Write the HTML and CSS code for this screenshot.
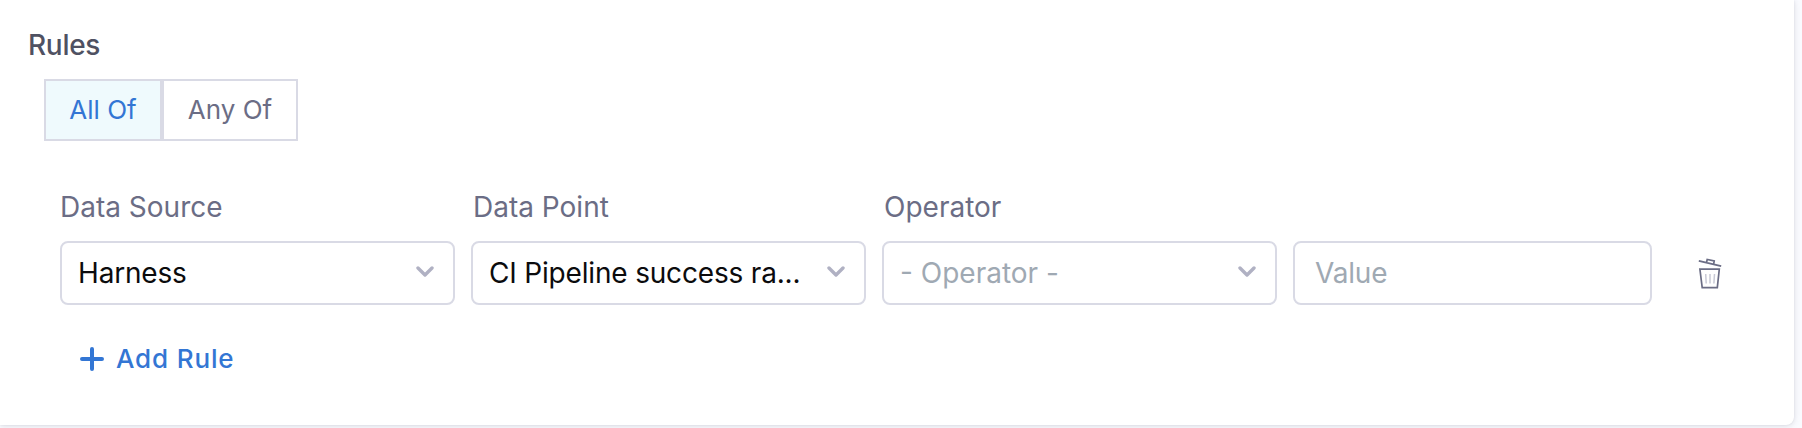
FILE: index.html
```html
<!DOCTYPE html>
<html lang="en">
<head>
<meta charset="utf-8">
<title>Rules</title>
<link rel="stylesheet" href="styles.css">
</head>
<body>
<section class="card">
  <h2 class="title">Rules</h2>
  <div class="toggle">
    <button class="toggle-btn all active">All Of</button>
    <button class="toggle-btn any">Any Of</button>
  </div>
  <div class="rule">
    <div class="field">
      <label class="label">Data Source</label>
      <div class="select"><span class="text">Harness</span><svg class="chevron" viewBox="0 0 18 11"><path d="M2 2l7 7 7-7"/></svg></div>
    </div>
    <div class="field">
      <label class="label inset">Data Point</label>
      <div class="select"><span class="text">CI Pipeline success ra...</span><svg class="chevron" viewBox="0 0 18 11"><path d="M2 2l7 7 7-7"/></svg></div>
    </div>
    <div class="field">
      <label class="label inset">Operator</label>
      <div class="select placeholder"><span class="text">- Operator -</span><svg class="chevron" viewBox="0 0 18 11"><path d="M2 2l7 7 7-7"/></svg></div>
    </div>
    <div class="value placeholder">Value</div>
    <svg class="trash" viewBox="0 0 24 32">
      <path d="M.8 2.8L23.2 8.2M8.6 4.3l.6-2.8 7 1.4-.5 3M1.9 11.2h19.4l-2 18.4H4.2z"/>
      <path class="ribs" d="M7.7 16l.5 9.5M12 16v9.5M16.5 16l-.6 9.5"/>
    </svg>
  </div>
  <button class="add">
    <svg class="plus" viewBox="0 0 24 24"><path d="M12 2v20M2 12h20"/></svg>
    <span class="add-text">Add Rule</span>
  </button>
</section>
</body>
</html>
```
FILE: styles.css
```css
* { box-sizing: border-box; }
body {
  margin: 0;
  height: 428px;
  overflow: hidden;
  padding-right: 8px;
  background: #fafbff;
  font-family: Inter, "Liberation Sans", sans-serif;
}
button {
  margin: 0;
  background: none;
  font-family: inherit;
}
.card {
  height: 425px;
  padding: 28px 0 0 28px;
  background: #fff;
  border-radius: 0 0 8px 0;
  box-shadow: 0 0 2px rgba(40, 41, 61, .08), 0 1px 6px rgba(96, 97, 112, .2);
}
.title {
  margin: 0;
  font-size: 28px;
  line-height: 34px;
  font-weight: 550;
  letter-spacing: -.3px;
  color: #4f5162;
}
.toggle {
  display: flex;
  margin: 17px 0 0 16px;
}
.toggle-btn {
  height: 62px;
  padding: 0 0 2px;
  border: 2px solid #d9dae5;
  font-size: 26px;
  color: #6b6d85;
}
.all { width: 118px; }
.any { width: 136px; }
.active {
  background: #effafd;
  color: #3376d4;
}
.rule {
  display: flex;
  align-items: flex-end;
  gap: 16px;
  margin: 49px 0 0 32px;
}
.field { width: 395px; }
.label {
  display: block;
  height: 34px;
  margin-bottom: 17px;
  font-size: 28px;
  line-height: 34px;
  color: #6b6d85;
}
.inset { padding-left: 2px; }
.select, .value {
  display: flex;
  align-items: center;
  height: 64px;
  padding: 0 19px 0 16px;
  border: 2px solid #d9dae5;
  border-radius: 8px;
  font-size: 28px;
  letter-spacing: -.18px;
  color: #0b0b0d;
}
.value {
  width: 359px;
  padding-left: 20px;
}
.placeholder { color: #9fa9b3; }
.select.placeholder { letter-spacing: 0; }
.text {
  flex: 1;
  white-space: nowrap;
}
.chevron {
  width: 18px;
  height: 11px;
  margin-bottom: 4px;
  fill: none;
  stroke: #b0b1c3;
  stroke-width: 3.4;
  stroke-linecap: round;
  stroke-linejoin: round;
}
.trash {
  width: 24px;
  height: 32px;
  margin: 0 0 15px 30px;
  fill: none;
  stroke: #6b6d85;
  stroke-width: 1.7;
}
.ribs {
  stroke: #c9cad6;
  stroke-width: 1.5;
}
.add {
  display: flex;
  align-items: center;
  gap: 12px;
  height: 34px;
  margin: 37px 0 0 52px;
  padding: 0;
  border: 0;
  font-size: 26px;
  font-weight: 550;
  letter-spacing: .85px;
  color: #3376d4;
}
.add-text { padding-bottom: 2px; }
.plus {
  width: 24px;
  height: 24px;
  fill: none;
  stroke: currentColor;
  stroke-width: 4;
  stroke-linecap: round;
}
```
